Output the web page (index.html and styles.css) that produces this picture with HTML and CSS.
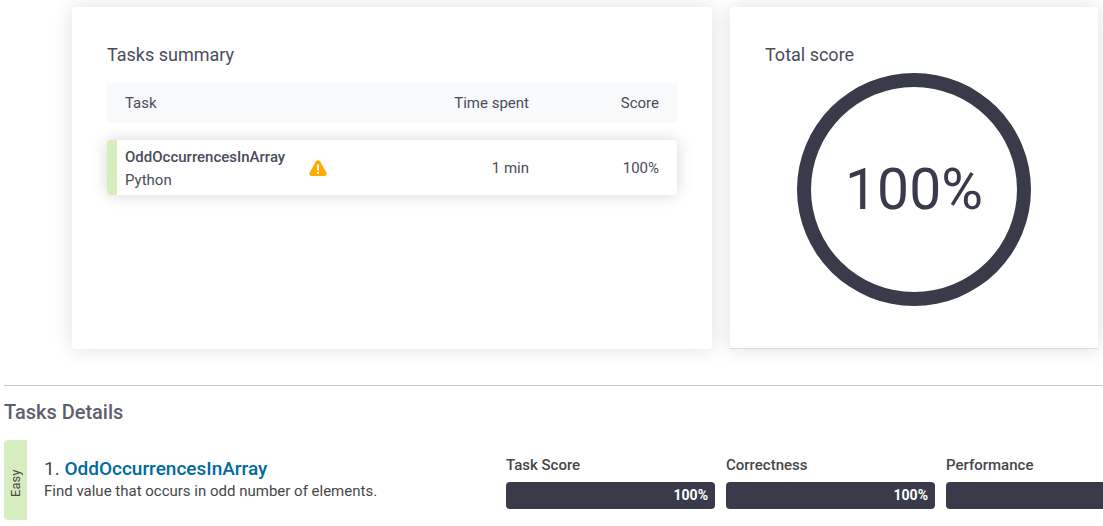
FILE: index.html
```html
<!DOCTYPE html>
<html lang="en">
<head>
<meta charset="utf-8">
<title>Test results</title>
<link rel="stylesheet" href="styles.css">
</head>
<body>
<main>
  <div class="overview">
    <section class="card">
      <h2 class="card-title">Tasks summary</h2>
      <table class="summary">
        <thead>
          <tr><th class="col-task">Task</th><th class="col-flag"></th><th class="col-time">Time spent</th><th class="col-score">Score</th></tr>
        </thead>
        <tbody>
          <tr>
            <td class="task-cell"><strong class="task-name">OddOccurrencesInArray</strong><span class="task-lang">Python</span></td>
            <td class="flag-cell">
              <svg class="warning" viewBox="0 0 18 16" role="img" aria-label="Warning">
                <path d="M7 1.2Q9-.8 11 1.2L17.200 12.2Q18.400 15.600 15.500 16H2.500Q-.400 15.600 .800 12.200Z" fill="#ffaa00"/>
                <path d="M9 4.500V10.200" stroke="#fff" stroke-width="2"/>
                <path d="M9 11.700V13.700" stroke="#fff" stroke-width="2"/>
              </svg>
            </td>
            <td class="num">1 min</td>
            <td class="num">100%</td>
          </tr>
        </tbody>
      </table>
    </section>
    <section class="card card-total">
      <h2 class="card-title">Total score</h2>
      <div class="ring">100%</div>
    </section>
  </div>
  <section class="details">
    <h2 class="details-title">Tasks Details</h2>
    <article class="task">
      <div class="level"><span class="level-text">Easy</span></div>
      <div class="task-info">
        <h3 class="task-heading">1. <a class="task-link" href="#task">OddOccurrencesInArray</a></h3>
        <p class="task-desc">Find value that occurs in odd number of elements.</p>
      </div>
      <div class="scores">
        <div class="score"><span class="score-label">Task Score</span><div class="bar">100%</div></div>
        <div class="score"><span class="score-label">Correctness</span><div class="bar">100%</div></div>
        <div class="score"><span class="score-label">Performance</span><div class="bar">100%</div></div>
      </div>
    </article>
  </section>
</main>
</body>
</html>
```
FILE: styles.css
```css
* { box-sizing: border-box; }
body {
  margin: 0;
  background: #fff;
  color: #474747;
  font: 15px/23px Roboto, "Liberation Sans", sans-serif;
  overflow-x: hidden;
}
h2, h3, p { margin: 0; font-weight: 400; }
.overview {
  display: grid;
  grid-template-columns: 640fr 368fr;
  gap: 18px;
  padding: 7px 5px 36px 72px;
  color: #4a4c5a;
}
.card {
  min-height: 342px;
  padding: 36px 35px 35px;
  border-radius: 4px;
  background: #fff;
  box-shadow: 0 0 20px rgba(0, 0, 0, 0.13);
}
.card-total {
  border-bottom: 1px solid #d9dae3;
  border-radius: 4px 4px 0 0;
}
.card-title { font-size: 18px; line-height: 23px; }
.summary {
  width: 100%;
  table-layout: fixed;
  border-spacing: 0 17px;
}
.summary th {
  height: 40px;
  padding: 0 18px;
  background: #f8f9fb;
  font-weight: 400;
  text-align: right;
}
.summary .col-task { width: 193px; text-align: left; }
.summary .col-flag { width: 36px; padding: 0; }
.col-score { width: 130px; }
.summary td { padding: 1px 18px 0; height: 55px; }
.summary tbody tr { border-radius: 4px; box-shadow: 0 0 16px rgba(0, 0, 0, 0.16); }
.summary .task-cell {
  padding: 6px 0 3px 8px;
  border-left: 10px solid #d6eebf;
  border-radius: 4px 0 0 4px;
}
.task-name, .task-lang { display: block; }
.task-name { font-weight: 500; }
.summary .flag-cell { padding: 0; text-align: center; }
.warning { display: block; width: 18px; height: 16px; margin: 0 auto; }
.num { text-align: right; }
.ring {
  display: flex;
  align-items: center;
  justify-content: center;
  width: 234px;
  height: 233px;
  margin: 7px auto 0;
  border: 14px solid #393b4a;
  border-radius: 50%;
  color: #393b4a;
  font-size: 57px;
}
.details {
  margin-left: 4px;
  border-top: 1px solid #c8c9cb;
}
.details-title {
  padding: 14px 0 16px;
  color: #5d5f6c;
  font-size: 20px;
  line-height: 24px;
  font-weight: 500;
}
.task { display: flex; height: 80px; }
.level {
  display: flex;
  flex: none;
  width: 23px;
  justify-content: center;
  padding-bottom: 23px;
  border-radius: 4px 0 0 4px;
  background: #d6eebf;
  font-size: 13px;
}
.level-text {
  writing-mode: vertical-rl;
  transform: rotate(180deg);
}
.task-info { flex: 1 0 479px; padding: 17px 0 0 17px; }
.task-heading { font-size: 19px; }
.task-link { color: #00699e; font-weight: 500; text-decoration: none; }
.scores { display: flex; flex: none; gap: 11px; padding-top: 14px; }
.score { width: 209px; }
.score-label { display: block; margin-bottom: 5px; font-weight: 500; }
.bar {
  height: 27px;
  padding-right: 7px;
  border-radius: 4px;
  background: #393b4a;
  color: #fff;
  font-size: 14px;
  font-weight: 700;
  line-height: 27px;
  text-align: right;
}
```
